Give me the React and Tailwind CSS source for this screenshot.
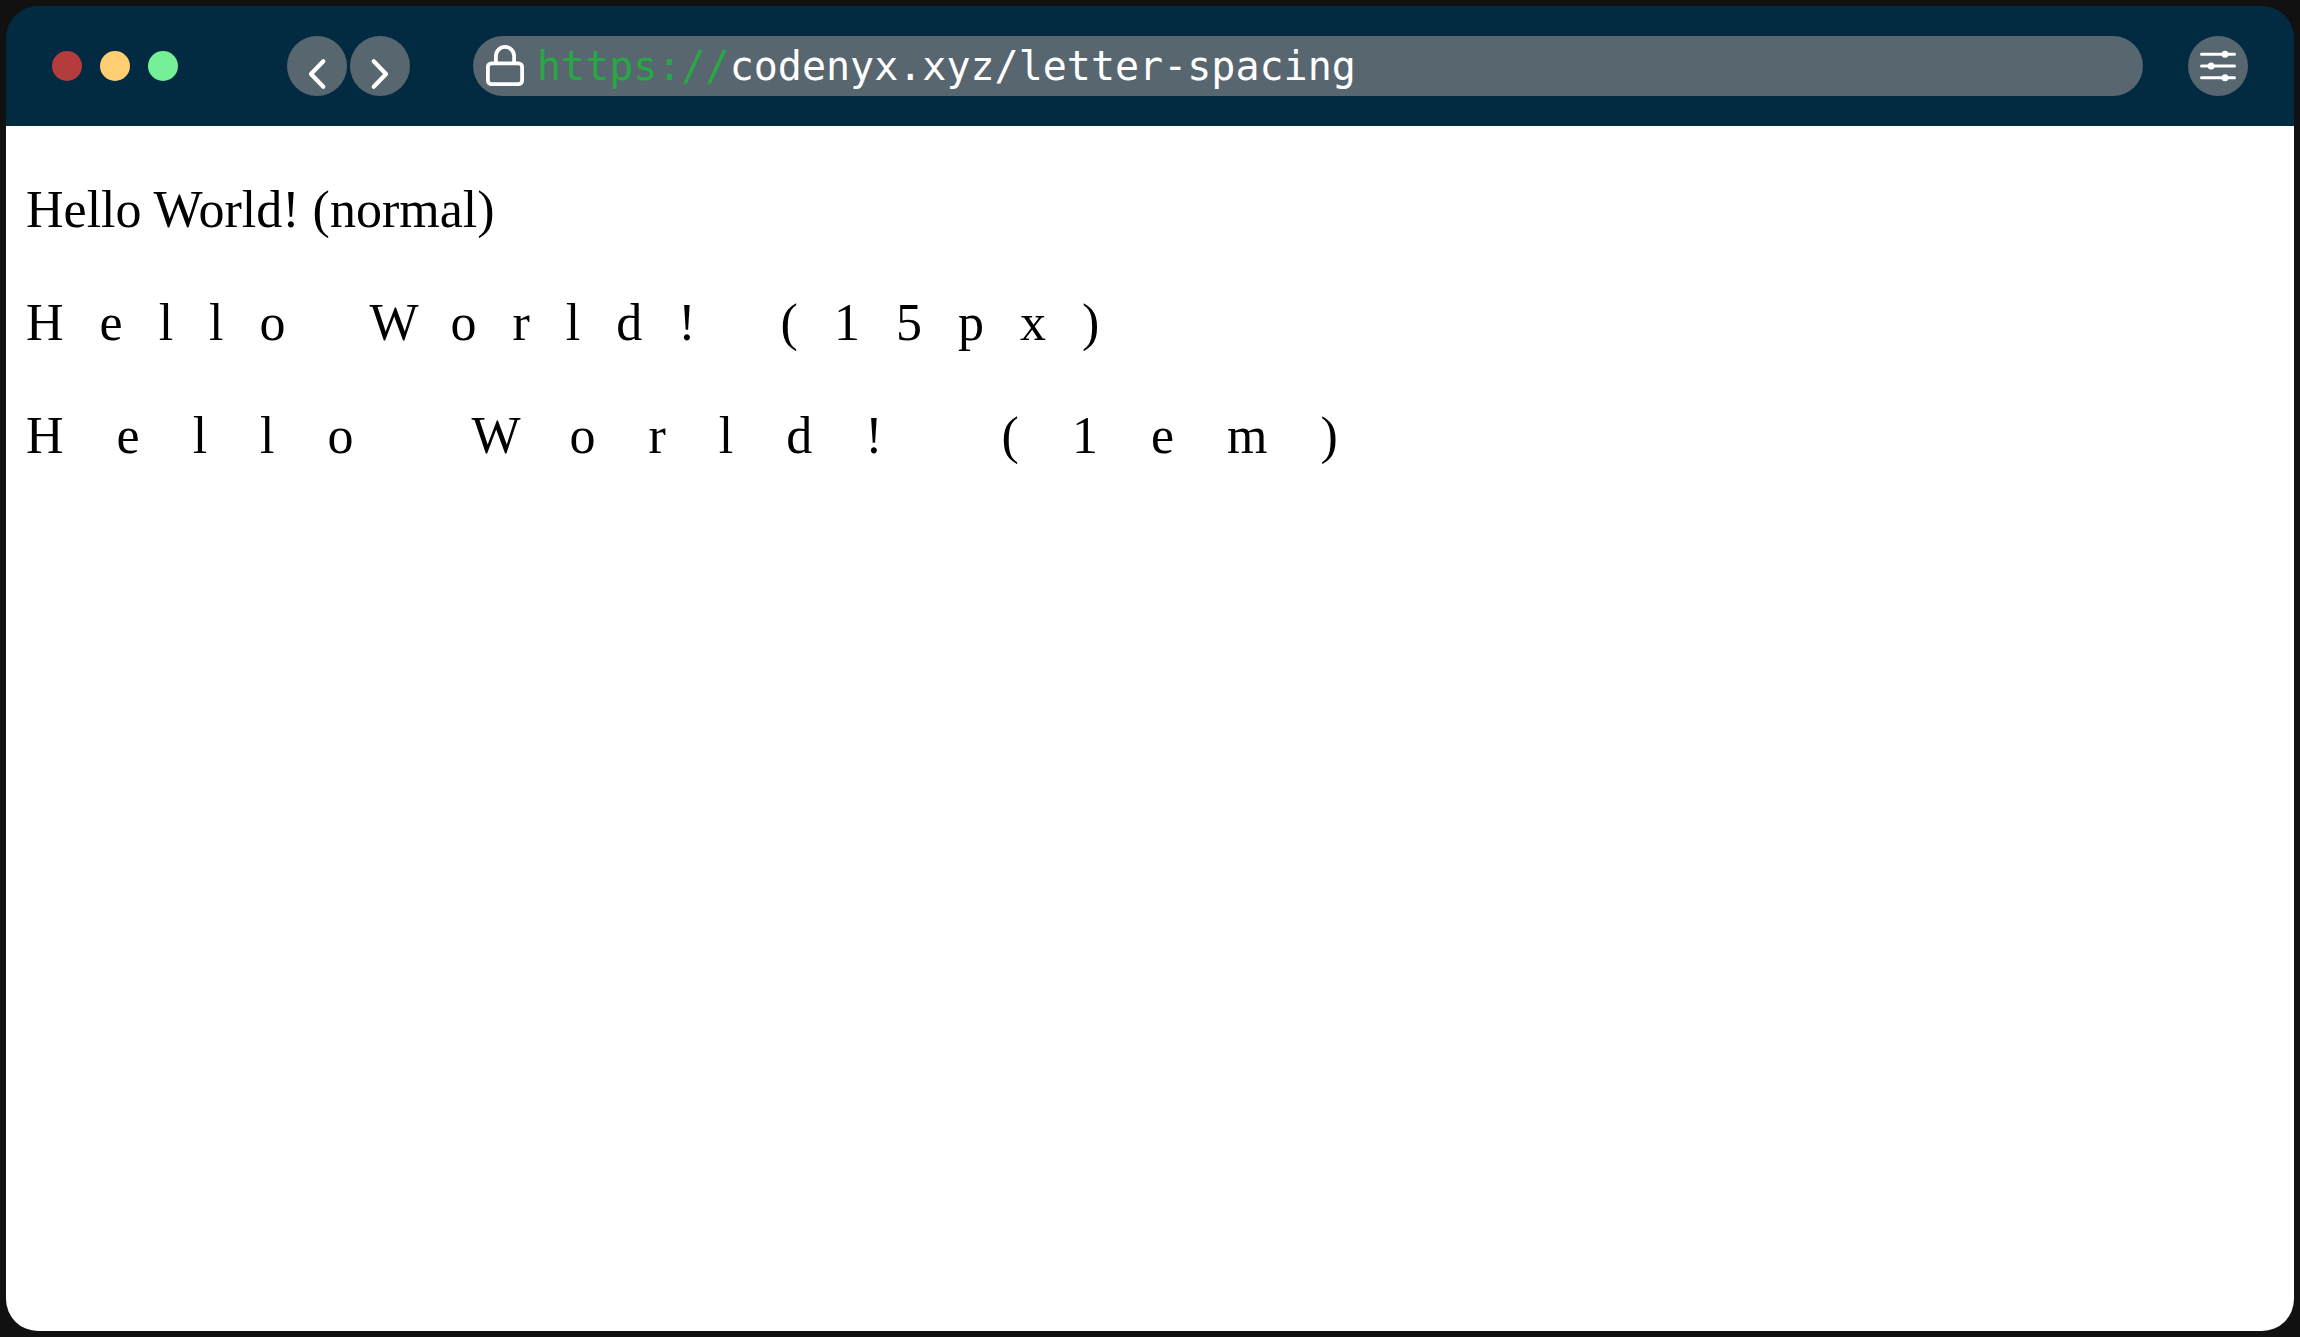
function Chevron({ d }) {
  return (
    <svg viewBox="0 0 60 60" className="size-full" fill="none" stroke="white" strokeWidth="4.2" strokeLinecap="round" strokeLinejoin="round" aria-hidden="true">
      <path d={d} />
    </svg>
  );
}

function Lock() {
  return (
    <svg viewBox="0 0 38 42" className="h-[42px] w-[38px] shrink-0" fill="none" stroke="white" strokeWidth="3.8" aria-hidden="true">
      <rect x="1.9" y="18.4" width="34.2" height="20.7" rx="3.6" />
      <path d="M9.9 18.4V11a9.1 9.1 0 0 1 18.2 0v7.4" />
    </svg>
  );
}

function Sliders() {
  return (
    <svg viewBox="0 0 60 60" className="size-full" fill="white" stroke="white" strokeWidth="3" strokeLinecap="round" aria-hidden="true">
      <path d="M13.5 18.3h33M13.5 30h33M13.5 41.7h33" />
      <g stroke="none">
        <circle cx="37" cy="18.3" r="3.5" />
        <circle cx="23.2" cy="30" r="3.5" />
        <circle cx="37" cy="41.7" r="3.5" />
      </g>
    </svg>
  );
}

export default function App() {
  return (
    <div className="flex min-h-screen bg-[#111111] p-1.5">
      <div className="flex min-w-0 flex-1 flex-col overflow-hidden rounded-[32px]">
        <header className="flex h-[120px] items-center bg-[#022b41] px-[46px]">
          <div className="flex gap-[18px]">
            <button aria-label="Close" className="size-[30px] rounded-full bg-[#b53c3c]" />
            <button aria-label="Minimize" className="size-[30px] rounded-full bg-[#ffce72]" />
            <button aria-label="Maximize" className="size-[30px] rounded-full bg-[#76f097]" />
          </div>
          <nav className="ml-[109px] flex gap-[3px]">
            <button aria-label="Back" className="size-[60px] rounded-full bg-[#58666f]">
              <Chevron d="M36.3 25.3L24 38l12.3 12.7" />
            </button>
            <button aria-label="Forward" className="size-[60px] rounded-full bg-[#58666f]">
              <Chevron d="M23.7 25.3L36 38L23.7 50.7" />
            </button>
          </nav>
          <div className="ml-[63px] mr-[45px] flex h-[60px] min-w-0 flex-1 items-center rounded-full bg-[#58666f] pl-[13px] pr-6 font-['DejaVu_Sans_Mono',monospace] text-[40px] leading-[60px]">
            <Lock />
            <label htmlFor="address" className="ml-[13px] text-[#28a745]">https://</label>
            <input id="address" defaultValue="codenyx.xyz/letter-spacing" spellCheck={false} className="h-[60px] min-w-0 flex-1 bg-transparent text-white outline-none" />
          </div>
          <button aria-label="Settings" className="size-[60px] shrink-0 rounded-full bg-[#58666f]">
            <Sliders />
          </button>
        </header>
        <main className="flex flex-1 flex-col gap-[53px] bg-white px-5 py-[54px] font-['Liberation_Serif',serif] text-[52px] leading-[60px] text-black">
          <p>Hello World! (normal)</p>
          <p className="tracking-[36px]">Hello World! (15px)</p>
          <p className="tracking-[53px]">Hello World! (1em)</p>
        </main>
      </div>
    </div>
  );
}
